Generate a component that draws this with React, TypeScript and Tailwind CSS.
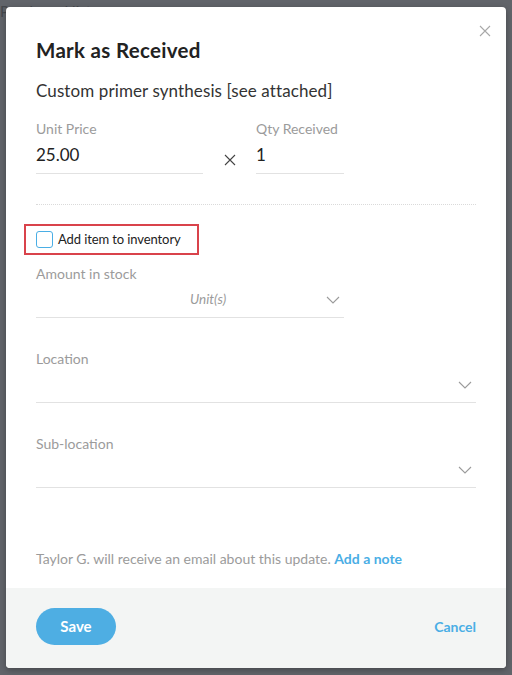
import { useState } from 'react';

function Chevron({ className = '' }: { className?: string }) {
  return (
    <svg width="14" height="8" viewBox="0 0 14 8" className={className} fill="none">
      <path d="M1 1l6 6 6-6" stroke="#9b9b9b" strokeWidth="1.1" />
    </svg>
  );
}

function SelectField({ label }: { label: string }) {
  return (
    <div className="flex flex-col">
      <span className="text-[14px] leading-4 text-[#9b9b9b]">{label}</span>
      <div className="flex h-[36px] items-center justify-end border-b border-[#e2e2e2] pr-[4px]">
        <Chevron />
      </div>
    </div>
  );
}

export default function App() {
  const [checked, setChecked] = useState(false);

  return (
    <div
      className="relative h-[675px] w-[512px] overflow-hidden bg-[#61646a]"
      style={{ fontFamily: 'Lato, "Open Sans", sans-serif' }}
    >
      {/* page behind the overlay */}
      <div className="absolute left-0 top-[1px] text-[15px] leading-5 text-[#45484d]">Purchased list</div>

      <div className="relative ml-[6px] mt-[7px] flex h-[661px] w-[500px] flex-col overflow-hidden rounded-[4px] bg-white shadow-[0_2px_6px_rgba(0,0,0,0.3)]">
        <button className="absolute right-[14px] top-[17px] p-[1px]">
          <svg width="12" height="12" viewBox="0 0 12 12" fill="none">
            <path d="M1 1l10 10M11 1L1 11" stroke="#a8a8a8" strokeWidth="1.1" />
          </svg>
        </button>

        <div className="flex flex-1 flex-col px-[30px] pt-[31px]">
          <h1 className="text-[20.5px] font-bold leading-6 tracking-[0.3px] text-[#222]">Mark as Received</h1>
          <p className="mt-[19px] text-[17px] leading-5 tracking-[0.1px] text-[#333]">Custom primer synthesis [see attached]</p>

          <div className="mt-[20px] flex items-end">
            <div className="flex w-[167px] flex-col">
              <span className="text-[14px] leading-4 text-[#9b9b9b]">Unit Price</span>
              <span className="flex h-[37px] items-center border-b border-[#e2e2e2] text-[17px] text-[#222]">25.00</span>
            </div>
            <div className="flex w-[53px] items-center justify-center pb-[8px]">
              <svg width="12" height="12" viewBox="0 0 12 12" fill="none">
                <path d="M1 1l10 10M11 1L1 11" stroke="#444" strokeWidth="1.1" />
              </svg>
            </div>
            <div className="flex w-[88px] flex-col">
              <span className="text-[14px] leading-4 text-[#9b9b9b]">Qty Received</span>
              <span className="flex h-[37px] items-center border-b border-[#e2e2e2] text-[17px] text-[#222]">1</span>
            </div>
          </div>

          <div className="mt-[30px] border-t border-dotted border-[#dadada]" />

          <label className="-ml-[12px] mt-[19px] flex h-[31px] w-[175px] cursor-pointer items-center gap-[5px] border-2 border-[#d9434b] pl-[10px]">
            <input
              type="checkbox"
              checked={checked}
              onChange={() => setChecked(!checked)}
              className="h-[17px] w-[17px] appearance-none rounded-[3px] border border-[#4aaee5] bg-white checked:bg-[#4aaee5]"
            />
            <span className="text-[13px] tracking-[-0.1px] text-[#222]">Add item to inventory</span>
          </label>

          <div className="mt-[11px] flex w-[308px] flex-col">
            <span className="text-[14px] leading-4 text-[#9b9b9b]">Amount in stock</span>
            <div className="flex h-[36px] items-center border-b border-[#e2e2e2] pr-[4px]">
              <span className="flex-1 pl-[154px] text-[13.5px] italic text-[#9b9b9b]">Unit(s)</span>
              <Chevron />
            </div>
          </div>

          <div className="mt-[33px]">
            <SelectField label="Location" />
          </div>
          <div className="mt-[33px]">
            <SelectField label="Sub-location" />
          </div>

          <p className="mt-[60px] text-[14px] text-[#9b9b9b]">
            Taylor G. will receive an email about this update.{' '}
            <a className="font-bold text-[#4aaee5]" href="#">Add a note</a>
          </p>
        </div>

        <div className="flex h-[80px] items-center justify-between bg-[#f3f5f4] px-[30px] pb-[3px]">
          <button className="h-[37px] w-[80px] rounded-full bg-[#4eaee3] text-[15px] font-bold text-white">Save</button>
          <button className="text-[14px] font-bold text-[#4aaee5]">Cancel</button>
        </div>
      </div>
    </div>
  );
}
